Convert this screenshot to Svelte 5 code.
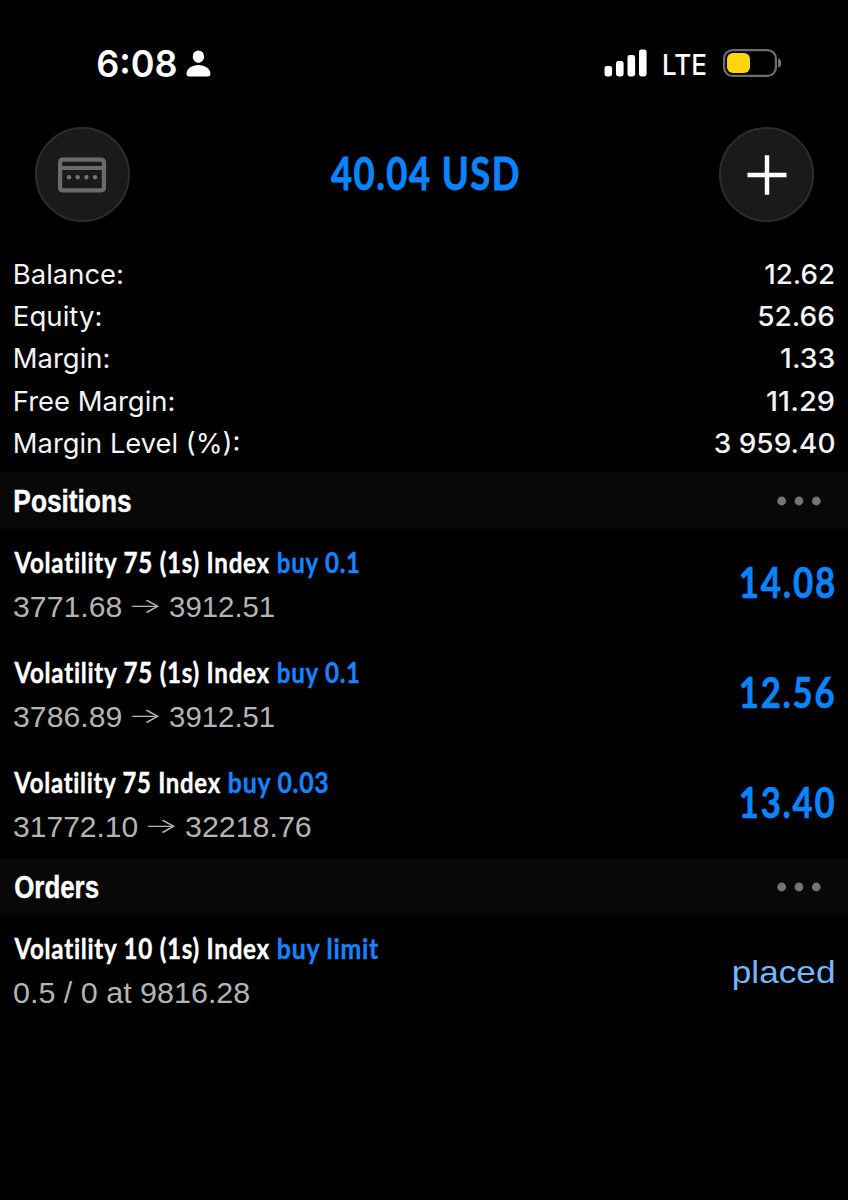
<script>
  const summary = [
    { label: 'Balance:', lw: 107, value: '12.62', vw: 68.5 },
    { label: 'Equity:', lw: 85.5, value: '52.66', vw: 74.5 },
    { label: 'Margin:', lw: 93.5, value: '1.33', vw: 53 },
    { label: 'Free Margin:', lw: 158.5, value: '11.29', vw: 66.5 },
    { label: 'Margin Level (%):', lw: 223.5, value: '3 959.40', vw: 119 }
  ];

  const positions = [
    { name: 'Volatility 75 (1s) Index', nw: 256, side: 'buy 0.1', sw: 81.5, from: '3771.68', fw: 107, to: '3912.51', tw: 104, profit: '14.08' },
    { name: 'Volatility 75 (1s) Index', nw: 256, side: 'buy 0.1', sw: 81.5, from: '3786.89', fw: 107, to: '3912.51', tw: 104, profit: '12.56' },
    { name: 'Volatility 75 Index', nw: 207, side: 'buy 0.03', sw: 99.5, from: '31772.10', fw: 123.5, to: '32218.76', tw: 124.5, profit: '13.40' }
  ];

  // Condenses or widens a text so that its inked extent fills the given width.
  // Measured at ten times the size, since canvas rounds the ink box to whole pixels.
  function condense(node, width) {
    const css = getComputedStyle(node);
    const ctx = document.createElement('canvas').getContext('2d');
    const spacing = parseFloat(css.letterSpacing) || 0;
    ctx.font = `${css.fontWeight} ${parseFloat(css.fontSize) * 10}px ${css.fontFamily}`;
    ctx.fontKerning = css.fontKerning;
    ctx.letterSpacing = `${spacing * 10}px`;
    const text = node.textContent;
    const m = ctx.measureText(text);
    const left = -m.actualBoundingBoxLeft / 10;
    const right = m.actualBoundingBoxRight / 10;
    const scale = width / (right - left);
    node.style.transform = `translateX(${-left * scale}px) scaleX(${scale})`;
  }
</script>

{#snippet fit(text, width, cls = '')}
  <span class="fit {cls}" style="width:{width}px"><span class="ink" use:condense={width}>{text}</span></span>
{/snippet}

{#snippet section(title, width)}
  <div class="section">
    {@render fit(title, width, 'heading')}
    <svg class="more" width="44" height="10" viewBox="0 0 44 10" fill="#747474">
      <circle cx="4.7" cy="5" r="4.4" /><circle cx="22" cy="5" r="4.4" /><circle cx="39.3" cy="5" r="4.4" />
    </svg>
  </div>
{/snippet}

<main>
  <div class="status">
    <div class="clock">
      {@render fit('6:08', 78, 'time')}
      <svg width="25" height="27" viewBox="0 0 25 27" fill="#fff">
        <ellipse cx="12.4" cy="6.7" rx="5.7" ry="6.2" />
        <path d="M.5 23.8C.5 18.8 6 15 12.4 15s12 3.8 12 8.8c0 2-.9 2.7-2.7 2.7H3.2C1.4 26.5.5 25.8.5 23.8Z" />
      </svg>
    </div>
    <div class="radio">
      <svg width="43" height="28" viewBox="0 0 43 28" fill="#fff">
        <rect x=".5" y="17" width="7.6" height="10.5" rx="2.4" />
        <rect x="12" y="12" width="7.6" height="15.5" rx="2.4" />
        <rect x="23.5" y="6" width="7.6" height="21.5" rx="2.4" />
        <rect x="35" y=".5" width="7.6" height="27" rx="2.4" />
      </svg>
      {@render fit('LTE', 41.5, 'lte')}
      <svg width="60" height="28" viewBox="0 0 60 28">
        <rect x="1.1" y="1.1" width="51.8" height="25.8" rx="8.5" fill="none" stroke="#6d6d6d" stroke-width="2.2" />
        <rect x="4" y="4" width="23" height="20" rx="6" fill="#ffd60a" />
        <path d="M55.2 9.3c2 .7 3 2.5 3 4.7s-1 4-3 4.7Z" fill="#7d7d7d" />
      </svg>
    </div>
  </div>

  <header>
    <button class="round" aria-label="Accounts">
      <svg width="48" height="36" viewBox="0 0 48 36">
        <path d="M2 11h44" stroke="#6b6b6b" stroke-width="4.2" />
        <rect x="2.1" y="2.6" width="43.8" height="30.8" rx="2.5" fill="none" stroke="#6b6b6b" stroke-width="4.2" />
        <g fill="#747474"><circle cx="11" cy="20.2" r="2.2" /><circle cx="19.7" cy="20.2" r="2.2" /><circle cx="28.4" cy="20.2" r="2.2" /><circle cx="37" cy="20.2" r="2.2" /></g>
      </svg>
    </button>
    {@render fit('40.04 USD', 187.5, 'total')}
    <button class="round" aria-label="New order">
      <svg width="40" height="40" viewBox="0 0 40 40" stroke="#fff" stroke-width="4.4"><path d="M.5 20h39M20 .3v39.4" /></svg>
    </button>
  </header>

  <div class="summary">
    {#each summary as s}
      <div class="line">{@render fit(s.label, s.lw)}{@render fit(s.value, s.vw, 'value')}</div>
    {/each}
  </div>

  {@render section('Positions', 115.5)}
  {#each positions as p}
    <div class="row">
      <div>
        <div class="title">{@render fit(p.name, p.nw)}{@render fit(p.side, p.sw, 'blue')}</div>
        <div class="detail">
          {@render fit(p.from, p.fw)}{@render fit('→', 27, 'arrow')}{@render fit(p.to, p.tw)}
        </div>
      </div>
      {@render fit(p.profit, 93, 'profit')}
    </div>
  {/each}

  {@render section('Orders', 83)}
  <div class="row">
    <div>
      <div class="title">{@render fit('Volatility 10 (1s) Index', 256)}{@render fit('buy limit', 101, 'blue')}</div>
      <div class="detail">{@render fit('0.5 / 0 at 9816.28', 235)}</div>
    </div>
    {@render fit('placed', 99.5, 'placed')}
  </div>
</main>

<style>
  :global(body) { background: #000; }
  main { width: 848px; height: 1200px; box-sizing: border-box; overflow: hidden; background: #000; color: #fff; font-family: Inter, sans-serif; }
  .fit { display: block; flex: none; white-space: pre; }
  .ink { display: inline-block; transform-origin: 0 50%; }
  .status { display: flex; justify-content: space-between; padding: 49px 65.5px 0 97.5px; height: 28px; }
  .clock, .radio { display: flex; }
  .clock { gap: 10.5px; }
  .radio { gap: 17px; }
  .clock svg { margin-top: 1px; }
  .time { font-size: 37px; font-weight: 600; line-height: 30px; }
  .lte { font-size: 28.5px; font-weight: 500; line-height: 31px; }
  header { display: flex; align-items: center; justify-content: space-between; padding: 50px 34px 0 34.5px; height: 95px; }
  .round { width: 95px; height: 95px; padding: 0; display: grid; place-items: center; border-radius: 50%; border: 2px solid #2d2d2d; background: #1a1a1a; }
  .total { font: 700 46.5px/60px Lato, sans-serif; font-kerning: none; letter-spacing: 0.04em; -webkit-text-stroke: 0.8px; color: #0a84ff; margin-top: -6px; }
  .summary { padding: 31.8px 14.5px 0 15px; height: 218.7px; }
  .line { display: flex; justify-content: space-between; height: 42.3px; line-height: 42px; font-size: 27px; color: #f4f4f4; }
  .value { font-weight: 500; }
  .section { display: flex; align-items: center; justify-content: space-between; height: 56.5px; padding: 0 27px 0 14.5px; background: #080808; }
  .heading { font: 700 31.5px/56px "Liberation Sans", sans-serif; -webkit-text-stroke: 0.4px; }
  .row { display: flex; justify-content: space-between; align-items: flex-start; height: 110px; padding: 0 14.3px 0 13.5px; }
  .title { display: flex; gap: 8px; margin-top: 15px; font: 700 29px/36px Lato, sans-serif; letter-spacing: 0.03em; font-variant-ligatures: none; -webkit-text-stroke: 0.4px; }
  .blue { color: #1982fc; }
  .detail { display: flex; gap: 11px; margin-top: 5px; font: 400 29.5px/44px "Liberation Sans", sans-serif; color: #b4b4b4; }
  .arrow { font: 300 21px/41px Inter, sans-serif; }
  .profit { font: 700 41.5px/60px Lato, sans-serif; font-kerning: none; letter-spacing: 0.05em; -webkit-text-stroke: 0.6px; color: #0a84ff; margin-top: 23.5px; }
  .placed { font: 400 32px/40px "Liberation Sans", sans-serif; color: #72b7ff; margin-top: 37px; }
</style>
